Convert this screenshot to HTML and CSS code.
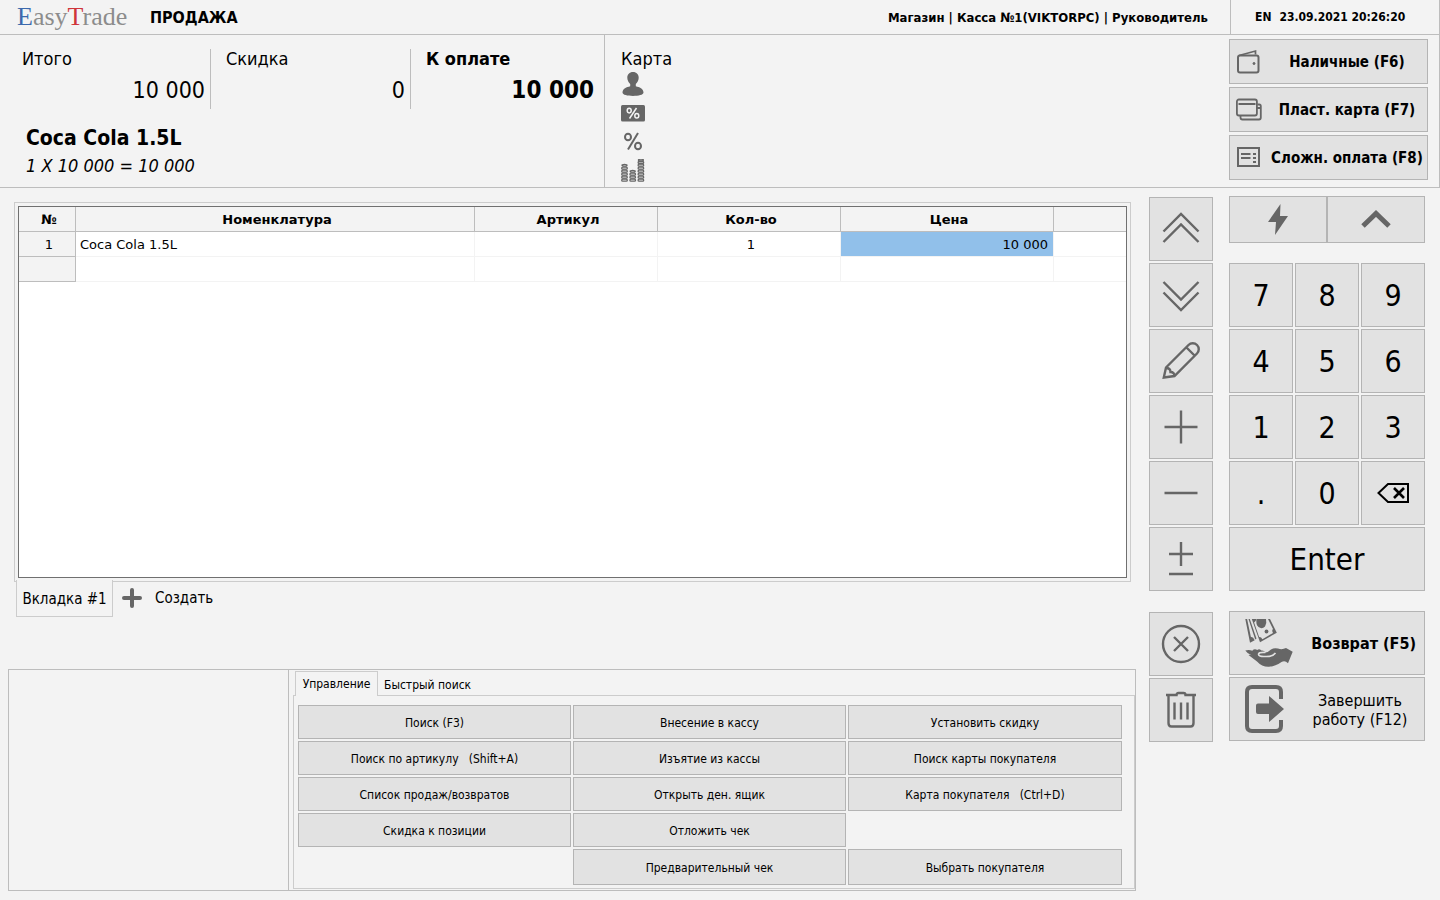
FILE: index.html
```html
<!DOCTYPE html>
<html lang="ru">
<head>
<meta charset="utf-8">
<meta name="viewport" content="width=device-width, initial-scale=1">
<title>EasyTrade — Продажа</title>
<link rel="stylesheet" href="styles.css">
</head>
<body>
<div class="app">
  <header class="header">
    <div class="logo"><span class="logo-blue">E</span>asy<span class="logo-red">T</span>rade</div>
    <h1 class="title">ПРОДАЖА</h1>
    <div class="session">Магазин | Касса №1(VIKTORPC) | Руководитель</div>
    <div class="clock"><span>EN</span><time>23.09.2021 20:26:20</time></div>
  </header>

  <section class="summary">
    <div class="receipt">
      <dl class="totals">
        <div class="total"><dt>Итого</dt><dd>10 000</dd></div>
        <div class="total total-mid"><dt>Скидка</dt><dd>0</dd></div>
        <div class="total total-due"><dt>К оплате</dt><dd>10 000</dd></div>
      </dl>
      <div class="item-name">Coca Cola 1.5L</div>
      <div class="item-sum">1 X 10 000 = 10 000</div>
    </div>
    <div class="card">
      <div class="card-title">Карта</div>
      <ul class="card-icons">
        <li><svg width="24" height="24" viewBox="0 0 24 24"><path fill="currentColor" d="M12 0c3.600 0 5.700 2.500 5.700 5.700 0 2.600-1.300 4.700-2.900 6.300v2.300c3.600 1 7.700 2.200 7.700 6.300 0 2.400-5 3.400-10.500 3.400S1.500 23 1.500 20.600c0-4.100 4.100-5.300 7.700-6.300V12C7.600 10.400 6.300 8.300 6.300 5.700 6.300 2.500 8.400 0 12 0z"/></svg></li>
        <li><svg width="24" height="24" viewBox="0 0 24 24"><rect x="0" y="4" width="24" height="16.500" rx="1.500" fill="currentColor"/><g fill="none" stroke="#f3f3f3" stroke-width="1.500"><ellipse cx="8.200" cy="9.600" rx="2" ry="2.300"/><ellipse cx="15.800" cy="14.800" rx="2" ry="2.300"/><path d="M15.500 7l-7 10.500"/></g></svg></li>
        <li><svg width="24" height="24" viewBox="0 0 24 24"><g fill="none" stroke="currentColor" stroke-width="2"><ellipse cx="7" cy="7" rx="3" ry="3.300"/><ellipse cx="17" cy="16" rx="3" ry="3.300"/><path d="M17 3L7 19.500"/></g></svg></li>
        <li><svg width="24" height="24" viewBox="0 0 24 24"><g fill="none" stroke="currentColor" stroke-width="1.300"><g id="coins3"><rect x=".7" y="14.200" width="5.600" height="2" rx="1"/><rect x=".7" y="17.200" width="5.600" height="2" rx="1"/><rect x=".7" y="20.200" width="5.600" height="2" rx="1"/></g><rect x=".7" y="8.200" width="5.600" height="2" rx="1"/><rect x=".7" y="11.200" width="5.600" height="2" rx="1"/><ellipse cx="3.500" cy="6.300" rx="2.500" ry=".9"/><use href="#coins3" x="8.200"/><ellipse cx="11.700" cy="12.300" rx="2.500" ry=".9"/><use href="#coins3" x="16.400"/><use href="#coins3" x="16.400" y="-9"/><rect x="17.100" y="2.500" width="5.600" height="2" rx="1"/><ellipse cx="19.900" cy="1" rx="2.500" ry=".9"/></g></svg></li>
      </ul>
    </div>
    <div class="payments">
      <button class="btn pay"><svg width="26" height="26" viewBox="0 0 26 26" fill="none" stroke="currentColor" stroke-width="2"><rect x="2" y="6.500" width="20.500" height="17" rx="2"/><path d="M3 6.500L19.500 2v3.500" stroke-width="1.700"/><circle cx="18" cy="14.500" r="1" fill="currentColor" stroke-width="1"/></svg><span>Наличные (F6)</span></button>
      <button class="btn pay"><svg width="26" height="26" viewBox="0 0 26 26" fill="none" stroke="currentColor" stroke-width="1.800"><rect x=".9" y="2.500" width="20" height="16" rx="2"/><path d="M2.500 7h17M4.500 19v1.500q0 2 2 2h16.500q1.800 0 1.800-2V9q0-1.500-1.500-1.500h-2M21 11h4"/></svg><span>Пласт. карта (F7)</span></button>
      <button class="btn pay"><svg width="26" height="26" viewBox="0 0 26 26" fill="none" stroke="currentColor" stroke-width="2"><rect x="2" y="3" width="21" height="18"/><path d="M5 9h9.500M5 13h9.500M17 9h3M17 13h3M17 17h3"/></svg><span>Сложн. оплата (F8)</span></button>
    </div>
  </section>

  <main class="main">
    <div class="workspace">
      <div class="sheet">
        <div class="grid">
          <table class="goods">
            <colgroup><col class="c-num"><col><col class="c-mid"><col class="c-mid"><col class="c-price"><col class="c-rest"></colgroup>
            <thead><tr><th>№</th><th>Номенклатура</th><th>Артикул</th><th>Кол-во</th><th>Цена</th><th></th></tr></thead>
            <tbody>
              <tr><th scope="row">1</th><td>Coca Cola 1.5L</td><td></td><td class="center">1</td><td class="selected">10 000</td><td></td></tr>
              <tr><th scope="row"></th><td></td><td></td><td></td><td></td><td></td></tr>
            </tbody>
          </table>
        </div>
      </div>
      <nav class="sheet-tabs">
        <button class="sheet-tab">Вкладка #1</button>
        <button class="create"><svg width="20" height="20" viewBox="0 0 20 20"><path d="M10 2v16M2 10h16" stroke="currentColor" stroke-width="4" stroke-linecap="round"/></svg><span>Создать</span></button>
      </nav>
      <section class="panel">
        <div class="panel-side"></div>
        <div class="panel-main">
          <div class="tabs"><button class="tab active">Управление</button><button class="tab">Быстрый поиск</button></div>
          <div class="actions">
            <button class="btn">Поиск (F3)</button>
            <button class="btn">Внесение в кассу</button>
            <button class="btn">Установить скидку</button>
            <button class="btn">Поиск по артикулу&nbsp;&nbsp; (Shift+A)</button>
            <button class="btn">Изъятие из кассы</button>
            <button class="btn">Поиск карты покупателя</button>
            <button class="btn">Список продаж/возвратов</button>
            <button class="btn">Открыть ден. ящик</button>
            <button class="btn">Карта покупателя&nbsp;&nbsp; (Ctrl+D)</button>
            <button class="btn">Скидка к позиции</button>
            <button class="btn">Отложить чек</button>
            <button class="btn preview">Предварительный чек</button>
            <button class="btn customer">Выбрать покупателя</button>
          </div>
        </div>
      </section>
    </div>

    <div class="tools">
      <div class="tool-group">
        <button class="btn" aria-label="В начало"><svg width="40" height="40" viewBox="0 0 40 40"><path d="M2.500 22.500L20 5l17.500 17.500M2.500 33L20 15.500 37.500 33"/></svg></button>
        <button class="btn" aria-label="В конец"><svg width="40" height="40" viewBox="0 0 40 40"><path d="M2.500 7L20 24.500 37.500 7M2.500 17.500L20 35l17.500-17.500"/></svg></button>
        <button class="btn" aria-label="Изменить"><svg width="40" height="40" viewBox="0 0 40 40"><path d="M2.800 36.500L5 26.500 27.500 4a6 6 0 0 1 8.500 8.500L13.500 35zM25.500 6.500l8 8M5 27q4.500 0 4.500 4 4 0 4 4"/></svg></button>
        <button class="btn" aria-label="Добавить"><svg width="40" height="40" viewBox="0 0 40 40"><path d="M20 3.500v33M3.500 20h33"/></svg></button>
        <button class="btn" aria-label="Убавить"><svg width="40" height="40" viewBox="0 0 40 40"><path d="M3.500 20h33"/></svg></button>
        <button class="btn" aria-label="Сменить знак"><svg width="40" height="40" viewBox="0 0 40 40"><path d="M20 3v24M8 15h24M8 35h24"/></svg></button>
      </div>
      <div class="tool-group">
        <button class="btn" aria-label="Отмена"><svg width="40" height="40" viewBox="0 0 40 40"><circle cx="20" cy="20" r="18"/><path d="M13 13l14 14M27 13L13 27"/></svg></button>
        <button class="btn" aria-label="Удалить"><svg width="40" height="40" viewBox="0 0 40 40"><path d="M5 5h10.500q0-2 2-2h5q2 0 2 2H35M7.500 5v28q0 3.500 3 3.500h19q3 0 3-3.500V5M13.500 12.500v17M20 12.500v17M26.500 12.500v17"/></svg></button>
      </div>
    </div>

    <div class="pad">
      <div class="pad-top">
        <button class="btn" aria-label="Быстрый режим"><svg width="24" height="34" viewBox="0 0 24 34"><path fill="currentColor" d="M14.500 1L2 19h8L9 32l13-19h-8z"/></svg></button>
        <button class="btn" aria-label="Свернуть"><svg width="32" height="32" viewBox="0 0 32 32"><path d="M3 22L16 9.500 29 22" fill="none" stroke="currentColor" stroke-width="5"/></svg></button>
      </div>
      <div class="keys">
        <button class="btn">7</button><button class="btn">8</button><button class="btn">9</button>
        <button class="btn">4</button><button class="btn">5</button><button class="btn">6</button>
        <button class="btn">1</button><button class="btn">2</button><button class="btn">3</button>
        <button class="btn">.</button><button class="btn">0</button>
        <button class="btn" aria-label="Стереть"><svg width="32" height="22" viewBox="0 0 32 22" fill="none" stroke="#000" stroke-width="2"><path d="M11 2h20v18H11L1.500 11z"/><path d="M17 6l10 10M27 6L17 16" stroke-width="2.600"/></svg></button>
        <button class="btn enter">Enter</button>
      </div>
      <div class="finish">
        <button class="btn refund"><svg width="50" height="50" viewBox="0 0 50 50" fill="currentColor"><path d="M.3 1h1.800l3.800 18q2.300-.5 3.800 3.300L5 24.700z"/><path d="M3.500 1h1.300l6.700 19.500-1.300 1z"/><path d="M6.800 1h4.500q-.3 2.500-2.200 3.500l5 14.500q2-.3 3.300 2.200L28 15q-1.500-2.500 0-4L23 1h2l6.800 13.700L15 24.300z"/><path d="M11.500 1h9.500q1 4-1 7.500-3 3-6.500.5Q10.500 6 11.500 1z"/><circle cx="21.500" cy="13.500" r="1.900"/><path d="M.3 32.500q4-1 7 .3 2-2.500 5-.8 2-1.500 4 .5 2.500-.5 4.200 2 3-.5 5.500-3 3-2 7-1 4 1.500 8-.5l6.700 3.700-4.700 11.500q-3-3-6.500-1.200-7 4.700-12.500 4.700-7 .3-12-5.200L3.500 37q1.500-.5 3 .3-4-1.500-6.200-4.800z"/><path d="M20.500 34.500q-6.500-.5-7 1.700 0 2.500 6 2.300 8 .5 11-3.500" fill="none" stroke="#e2e2e2" stroke-width="1.600"/></svg><span>Возврат (F5)</span></button>
        <button class="btn exit"><svg width="50" height="50" viewBox="0 0 50 50"><path d="M36 15V8q0-5-5-5H7Q2 3 2 8v34q0 5 5 5h24q5 0 5-5v-6" fill="none" stroke="currentColor" stroke-width="4"/><path fill="currentColor" d="M13 19.500h11v-7.500l15 13-15 13v-8H13q-2 0-2-2v-6.500q0-2 2-2z"/></svg><span>Завершить<br>работу (F12)</span></button>
      </div>
    </div>
  </main>
</div>
</body>
</html>
```
FILE: styles.css
```css
:root {
  --bg: #f3f3f3;
  --face: #e2e2e2;
  --edge: #b4b4b4;
  --line: #bdbdbd;
  --soft: #cccccc;
  --icon: #666666;
}

* { box-sizing: border-box; }

body {
  margin: 0;
  background: var(--bg);
  color: #000;
  font-family: "DejaVu Sans Condensed", "Noto Sans", sans-serif;
  font-size: 12px;
}

button { font: inherit; color: inherit; padding: 0; }

svg { display: block; flex: none; }

.app { min-height: 100vh; display: flex; flex-direction: column; }

.btn {
  display: flex;
  align-items: center;
  justify-content: center;
  background: var(--face);
  border: 1px solid var(--edge);
}

.btn svg { color: var(--icon); }

/* header */
.header {
  display: flex;
  align-items: center;
  height: 35px;
  border-bottom: 1px solid var(--line);
  border-right: 1px solid var(--line);
  font-weight: bold;
}

.logo {
  width: 150px;
  padding-left: 17px;
  font: 26px/32px "Liberation Serif", serif;
  color: #8c8c8c;
}

.logo-blue { color: #3c69ad; }
.logo-red { color: #cf343a; }

.title { margin: 0; font-size: 16px; }
.session { margin-left: auto; padding-right: 22px; font-size: 13px; }

.clock {
  display: flex;
  align-items: center;
  gap: 8px;
  align-self: stretch;
  width: 209px;
  padding-left: 24px;
  border-left: 1px solid var(--line);
}

/* summary */
.summary {
  display: flex;
  height: 153px;
  border-bottom: 1px solid var(--line);
  border-right: 1px solid var(--line);
}

.receipt { width: 604px; }

.totals {
  display: grid;
  grid-template-columns: 211px 200px 193px;
  margin: 14px 0 0;
}

.total {
  height: 60px;
  padding: 0 5px 0 22px;
  border-right: 1px solid var(--line);
  line-height: 20px;
}

.total-mid { padding-left: 15px; }
.total-due { padding: 0 10px 0 15px; border-right: 0; font-weight: bold; }
.total dt { font-size: 18px; }
.total dd { margin: 6px 0 0; font-size: 23px; line-height: 30px; text-align: right; }
.total-due dd { font-size: 24px; }

.item-name { margin: 15px 0 0 26px; font-size: 21px; font-weight: bold; line-height: 28px; }
.item-sum { margin: 0 0 0 26px; font-size: 18px; font-style: italic; line-height: 28px; }

.card { padding: 12px 16px; border-left: 1px solid var(--line); color: var(--icon); }
.card-title { color: #000; font-size: 18px; line-height: 24px; }
.card-icons { display: grid; gap: 5px; margin: 1px 0 0; padding: 0; list-style: none; }

.payments {
  display: grid;
  grid-auto-rows: 45px;
  gap: 3px;
  width: 199px;
  margin: 4px 11px 0 auto;
}

.pay { gap: 5px; padding: 0 0 0 6px; font-size: 15px; font-weight: bold; white-space: nowrap; }
.pay span { flex: 1; text-align: center; }

/* main */
.main { flex: 1; display: flex; padding-right: 15px; }
.workspace { flex: 1; min-width: 0; display: flex; flex-direction: column; padding: 14px 0 9px; }

.sheet {
  flex: 1;
  display: flex;
  min-height: 200px;
  margin: 0 5px 0 14px;
  padding: 3px;
  border: 1px solid var(--soft);
}

.grid { flex: 1; border: 1px solid #707070; background: #fff; }

.goods {
  width: 100%;
  table-layout: fixed;
  border-collapse: separate;
  border-spacing: 0;
  font-family: "DejaVu Sans", sans-serif;
  font-size: 13px;
}

.c-num { width: 57px; }
.c-mid { width: 183px; }
.c-price { width: 213px; }
.c-rest { width: 72px; }

.goods th, .goods td {
  height: 25px;
  padding: 0 5px 0 4px;
  border-right: 1px solid #f3f3f3;
  border-bottom: 1px solid #f3f3f3;
  text-align: left;
}

.goods th { background: var(--bg); border-color: var(--line); }
.goods tbody th { font-weight: normal; }
.goods th:last-child, .goods td:last-child { border-right: 0; }
.goods th, .goods .center { padding: 0 2px 0 6px; text-align: center; }
.goods .selected { background: #91c0ea; text-align: right; }

.sheet-tabs { display: flex; height: 87px; padding-left: 16px; font-size: 15px; }

.sheet-tab {
  width: 97px;
  height: 37px;
  margin-top: -2px;
  padding-top: 2px;
  border: 1px solid var(--soft);
  border-top: 0;
  background: var(--bg);
}

.create {
  display: flex;
  align-items: center;
  gap: 13px;
  height: 32px;
  padding: 0 9px;
  border: 0;
  background: none;
}

.create svg { color: var(--icon); }

.panel { display: flex; height: 222px; margin-left: 8px; border: 1px solid var(--line); }
.panel-side { width: 280px; border-right: 1px solid var(--line); }
.panel-main { flex: 1; display: flex; flex-direction: column; padding: 1px 0 1px 4px; }

.tabs { display: flex; height: 25px; padding-left: 2px; }

.tab { height: 25px; padding: 2px 6px 0; border: 0; background: none; white-space: nowrap; }
.tab.active { width: 83px; padding: 0; border: 1px solid var(--soft); border-bottom: 0; background: var(--bg); z-index: 1; }

.actions {
  flex: 1;
  display: grid;
  grid-template-columns: 273fr 273fr 274fr;
  grid-template-rows: repeat(4, 34px) 36px;
  gap: 2px;
  margin-top: -1px;
  padding: 9px 12px 3px 4px;
  border: 1px solid var(--soft);
}

.actions .btn { padding-top: 2px; }
.preview { grid-column: 2; grid-row: 5; }
.customer { grid-column: 3; grid-row: 5; }

/* tool column */
.tools { width: 64px; margin-left: 13px; padding-top: 9px; }
.tool-group { display: grid; grid-auto-rows: 64px; gap: 2px; margin-bottom: 21px; }
.tools svg { fill: none; stroke: currentColor; stroke-width: 2.4; }

/* number pad */
.pad { width: 196px; margin-left: 16px; padding-top: 8px; }
.pad-top { display: grid; grid-template-columns: 1fr 1fr; height: 47px; }
.keys { display: grid; grid-template-columns: repeat(3, 1fr); grid-auto-rows: 64px; gap: 2px; margin-top: 20px; font-size: 30px; }
.enter { grid-column: 1 / -1; font-size: 31px; }

.finish { display: grid; grid-auto-rows: 64px; gap: 2px; margin-top: 20px; font-size: 16px; }
.finish .btn { padding: 0 8px 0 15px; white-space: nowrap; }
.finish span { flex: 1; text-align: right; }
.refund { font-weight: bold; }
.finish .exit span { padding: 2px 0 0 9px; font-size: 16px; line-height: 19px; text-align: center; }
```
